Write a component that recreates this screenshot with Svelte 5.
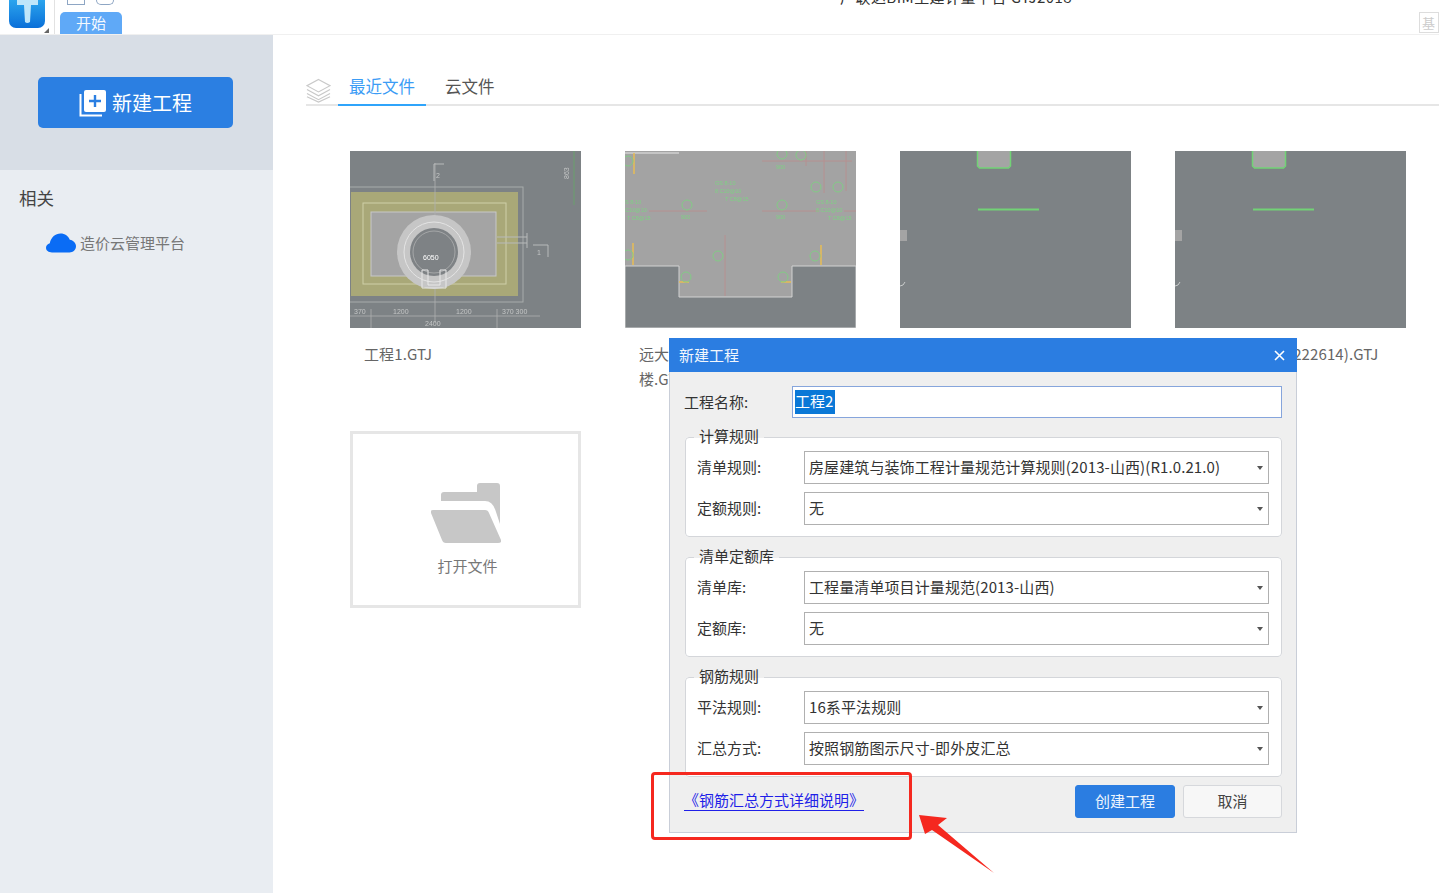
<script>
  let projectName = "工程2";

  const files = [
    { name: "工程1.GTJ", kind: "plan" },
    { name: "远大住宅工程项目一号地下室楼.GTJ", kind: "floor" },
    { name: "工程1备份工程(222613).GTJ", kind: "empty" },
    { name: "工程1备份工程(222614).GTJ", kind: "empty" }
  ];

  const groups = [
    {
      title: "计算规则",
      rows: [
        { label: "清单规则:", value: "房屋建筑与装饰工程计量规范计算规则(2013-山西)(R1.0.21.0)" },
        { label: "定额规则:", value: "无" }
      ]
    },
    {
      title: "清单定额库",
      rows: [
        { label: "清单库:", value: "工程量清单项目计量规范(2013-山西)" },
        { label: "定额库:", value: "无" }
      ]
    },
    {
      title: "钢筋规则",
      rows: [
        { label: "平法规则:", value: "16系平法规则" },
        { label: "汇总方式:", value: "按照钢筋图示尺寸-即外皮汇总" }
      ]
    }
  ];
</script>

<div class="app">
  <header class="topbar">
    <div class="logo-cell">
      <svg class="logo" viewBox="0 0 36 36" width="36" height="36">
        <defs>
          <linearGradient id="logoBg" x1="0" y1="0" x2="0" y2="1">
            <stop offset="0" stop-color="#35b4f4" />
            <stop offset="1" stop-color="#0a6fd8" />
          </linearGradient>
        </defs>
        <rect width="36" height="36" rx="7" fill="url(#logoBg)" />
        <path d="M8 6h21v7h-7l-1 17q-3 2-5 0l-1-17H8z" fill="#bfe6fa" />
      </svg>
      <span class="logo-corner"></span>
    </div>
    <div class="tools">
      <div class="quick">
        <span class="quick-a"></span>
        <span class="quick-b"></span>
      </div>
      <div class="start-tab">开始</div>
    </div>
    <div class="app-title">广联达BIM土建计量平台 GTJ2018</div>
    <div class="side-box">基</div>
  </header>

  <div class="content">
    <aside class="sidebar">
      <div class="side-top">
        <button class="new-btn">
          <svg viewBox="0 0 28 28" width="28" height="28">
            <path d="M1.500 5v21.500H23" fill="none" stroke="#fff" stroke-width="2" />
            <rect x="5" y="1" width="22" height="22" rx="2" fill="#fff" />
            <path d="M16 6v12M10 12h12" stroke="#2b7fe2" stroke-width="2.400" />
          </svg>
          <span>新建工程</span>
        </button>
      </div>
      <div class="side-rest">
        <div class="side-heading">相关</div>
        <div class="side-link">
          <svg viewBox="0 0 30 20" width="30" height="20">
            <path d="M6 19.500C2.500 19.500 0 17.500 0 14.800c0-2.300 1.500-4 3.800-4.600C5 4.200 9.500 0.500 14.500 0.500c4.500 0 8 2.600 9.300 6.300 3.500.6 6.200 3.300 6.200 6.500 0 3.500-3 6.200-6.500 6.200z" fill="#0a6cf5" />
          </svg>
          <span>造价云管理平台</span>
        </div>
      </div>
    </aside>

    <main class="main">
      <div class="tabs">
        <svg class="stack" viewBox="0 0 26 26" width="25" height="25" fill="none" stroke="#c9c9c9" stroke-width="1.200">
          <path d="M13 1.500 25 8l-12 6.500L1 8z" />
          <path d="M1 12l12 6.500L25 12" />
          <path d="M1 16l12 6.500L25 16" />
          <path d="M1 19.500l12 5.500 12-5.500" />
        </svg>
        <div class="tab active">最近文件</div>
        <div class="tab">云文件</div>
      </div>

      <div class="cards">
        {#each files as file}
          <div class="card">
            <div class="thumb">
              {#if file.kind === "plan"}
                <svg viewBox="0 0 231 177" width="231" height="177">
                  <rect width="231" height="177" fill="#7d8285" />
                  <rect x="-2" y="36" width="175" height="115" fill="none" stroke="#a8abab" />
                  <rect x="1" y="41" width="167" height="104" fill="#a9a878" />
                  <rect x="13" y="52" width="143" height="81" fill="none" stroke="#cfcfa8" />
                  <rect x="21" y="61" width="125" height="64" fill="#a4a4a4" stroke="#c8c8c8" />
                  <path d="M85 12v160M0 165h190M21 158v19M147 158v19" stroke="#aeb0b0" stroke-width=".8" fill="none" />
                  <path d="M84 30V13h10M183 94h15v12M177 82v15M147 86h30M147 92h30" stroke="#b8baba" fill="none" />
                  <path d="M224 0v54" stroke="#6aa06c" />
                  <circle cx="84" cy="101" r="37" fill="#c6c6c6" />
                  <circle cx="84" cy="101" r="30" fill="none" stroke="#e4e4e4" />
                  <circle cx="84" cy="101" r="24" fill="#7e8285" />
                  <circle cx="84" cy="101" r="21" fill="none" stroke="#a5a7a8" />
                  <path d="M72 119h6v15M96 119h-6v15M72 119v18h24v-18M78 134h12" stroke="#e8e8e8" fill="none" />
                  <text x="73" y="109" class="cad bright">6050</text>
                  <text x="4" y="163" class="cad">370</text>
                  <text x="43" y="163" class="cad">1200</text>
                  <text x="106" y="163" class="cad">1200</text>
                  <text x="152" y="163" class="cad">370 300</text>
                  <text x="75" y="175" class="cad">2400</text>
                  <text x="86" y="27" class="cad">2</text>
                  <text x="187" y="104" class="cad">1</text>
                  <text transform="translate(219 28) rotate(-90)" class="cad">863</text>
                </svg>
              {:else if file.kind === "floor"}
                <svg viewBox="0 0 231 177" width="231" height="177">
                  <rect width="231" height="177" fill="#a3a3a3" />
                  <path d="M0 2h54" stroke="#d0d0d0" stroke-width="1.500" />
                  <path d="M0 115h54v31h113v-31h64v62H0z" fill="#7d8285" stroke="#d2d2d2" />
                  <path d="M24 60h58M137 60h57M219 60h12M137 10h90M199 0v42M221 0v40M181 0v15M100 84v61" stroke="#b69090" fill="none" />
                  <path d="M9 2v21M8 92v22M196 94v20M54 131h10M156 131h10" stroke="#e8bd55" stroke-width="1.500" fill="none" />
                  <g fill="none" stroke="#82cc85">
                    <circle cx="62" cy="54" r="5" />
                    <circle cx="157" cy="54" r="5" />
                    <circle cx="157" cy="3" r="5" />
                    <circle cx="176" cy="4" r="5" />
                    <circle cx="191" cy="36" r="5" />
                    <circle cx="213" cy="36" r="5" />
                    <circle cx="93" cy="105" r="5" />
                    <circle cx="190" cy="105" r="5" />
                    <circle cx="61" cy="126" r="5" />
                    <circle cx="158" cy="126" r="5" />
                    <circle cx="3" cy="104" r="5" />
                    <circle cx="3" cy="10" r="5" />
                  </g>
                  <text x="90" y="34" class="cad green">GS 8-10</text>
                  <text x="90" y="42" class="cad green">8 C10@10</text>
                  <text x="100" y="50" class="cad green">T C8@15</text>
                  <text x="191" y="53" class="cad green">GS 8-10</text>
                  <text x="191" y="61" class="cad green">8 C10@10</text>
                  <text x="203" y="69" class="cad green">T C8@15</text>
                  <text x="0" y="53" class="cad green">S 8-10</text>
                  <text x="0" y="61" class="cad green">C10@10</text>
                  <text x="2" y="69" class="cad green">T C8@15</text>
                  <text x="56" y="68" class="cad green">900</text>
                  <text x="151" y="68" class="cad green">900</text>
                  <text x="151" y="18" class="cad green">900</text>
                </svg>
              {:else}
                <svg viewBox="0 0 231 177" width="231" height="177">
                  <rect width="231" height="177" fill="#7d8285" />
                  <path d="M77.500 0v15l2 2h29l2-2V0" fill="#a4a4a4" stroke="#72d276" stroke-width="1.500" />
                  <path d="M78 58.500h61" stroke="#72d276" stroke-width="2" />
                  <rect x="0" y="79" width="7" height="11" fill="#a4a4a4" />
                  <path d="M0 135l3-1 2-3" stroke="#c9cbcb" fill="none" />
                </svg>
              {/if}
            </div>
            <div class="file-name">{file.name}</div>
          </div>
        {/each}

        <div class="card open-card">
          <svg viewBox="0 0 70 60" width="70" height="60">
            <path d="M10 18v-6q0-3 3-3h33V3q0-3 3-3h17q3 0 3 3v38l-4-12q-3-11-11-11z" fill="#c7c7c7" />
            <path d="M2 27h52q3 0 4 3l12 27q1 3-3 3H15q-3 0-4-3L0 30q-1-3 2-3z" fill="#c7c7c7" />
          </svg>
          <span>打开文件</span>
        </div>
      </div>
    </main>
  </div>

  <section class="dialog">
    <div class="dialog-head">
      <span>新建工程</span>
      <svg viewBox="0 0 11 11" width="11" height="11">
        <path d="M1 1l9 9M10 1l-9 9" stroke="#fff" stroke-width="1.600" />
      </svg>
    </div>
    <div class="dialog-body">
      <div class="name-row">
        <span class="name-label">工程名称:</span>
        <div class="name-input"><span class="selected">{projectName}</span></div>
      </div>

      {#each groups as group}
        <fieldset class="group">
          <legend>{group.title}</legend>
          {#each group.rows as row}
            <div class="field">
              <span class="field-label">{row.label}</span>
              <div class="select">
                <span>{row.value}</span>
                <i class="caret"></i>
              </div>
            </div>
          {/each}
        </fieldset>
      {/each}

      <div class="dialog-foot">
        <span class="doc-link">《钢筋汇总方式详细说明》</span>
        <div class="actions">
          <button class="btn primary">创建工程</button>
          <button class="btn">取消</button>
        </div>
      </div>
    </div>
  </section>

  <div class="mark-box"></div>
  <svg class="mark-arrow" viewBox="0 0 80 62" width="80" height="62">
    <path d="M1 2 29 5 20 12 76 60 14 17 7 21z" fill="#f5281f" />
  </svg>
</div>

<style>
  :global(body) {
    background: #fff;
  }

  .app {
    position: relative;
    width: 1439px;
    height: 893px;
    overflow: hidden;
    background: #fff;
    font-family: "Noto Sans CJK SC", "Liberation Sans", sans-serif;
    font-size: 15px;
    color: #555;
  }

  .topbar {
    display: flex;
    height: 35px;
    overflow: hidden;
    box-sizing: border-box;
    border-bottom: 1px solid #f0f0f0;
  }

  .logo-cell {
    position: relative;
    flex: none;
    width: 45px;
    height: 34px;
    padding-left: 9px;
    border-right: 1px solid #e2e2e2;
  }

  .logo {
    display: block;
    margin-top: -8px;
  }

  .logo-corner {
    position: absolute;
    left: 44px;
    top: 28px;
    border-left: 5px solid transparent;
    border-bottom: 5px solid #666;
  }

  .tools {
    flex: none;
    width: 62px;
    margin-left: 5px;
  }

  .quick {
    display: flex;
    gap: 11px;
    height: 12px;
    padding-left: 7px;
  }

  .quick-a,
  .quick-b {
    display: block;
    width: 16px;
    height: 4px;
    border: 1px solid #8ea6c4;
    border-top: none;
  }

  .quick-b {
    border-radius: 0 0 5px 5px;
  }

  .start-tab {
    height: 23px;
    line-height: 21px;
    text-align: center;
    color: #f4f9ff;
    background: #5fa9f7;
    border-radius: 5px 5px 0 0;
  }

  .app-title {
    flex: none;
    margin: -14px 0 0 718px;
    line-height: 22px;
    letter-spacing: 0.45px;
    color: #333;
    white-space: nowrap;
  }

  .side-box {
    flex: none;
    box-sizing: border-box;
    width: 20px;
    height: 21px;
    margin: 12px 0 0 auto;
    border: 1px solid #ddd;
    font-size: 13px;
    line-height: 19px;
    color: #ccc;
    text-indent: 2px;
  }

  .content {
    display: flex;
    height: 858px;
  }

  .sidebar {
    flex: none;
    display: flex;
    flex-direction: column;
    width: 273px;
    background: #e9edf2;
  }

  .side-top {
    height: 135px;
    box-sizing: border-box;
    padding: 42px 0 0 38px;
    background: #d8dee6;
  }

  .new-btn {
    display: flex;
    align-items: center;
    justify-content: center;
    gap: 5px;
    width: 195px;
    height: 51px;
    padding: 0;
    border: none;
    border-radius: 5px;
    background: #2b7fe2;
    color: #fff;
    font: inherit;
    font-size: 20px;
  }

  .side-heading {
    margin: 15px 0 0 19px;
    font-size: 17.500px;
    line-height: 26px;
    color: #444;
  }

  .side-link {
    display: flex;
    align-items: center;
    gap: 4px;
    margin: 20px 0 0 46px;
    line-height: 24px;
    color: #777;
  }

  .main {
    flex: 1;
    min-width: 0;
    padding-left: 33px;
  }

  .tabs {
    display: flex;
    align-items: flex-end;
    height: 71px;
    border-bottom: 2px solid #e6e6e6;
    box-sizing: border-box;
  }

  .stack {
    flex: none;
    margin: 0 7px 1px 0;
  }

  .tab {
    box-sizing: border-box;
    height: 36px;
    margin-bottom: -2px;
    padding: 0 11px;
    font-size: 16.500px;
    line-height: 32px;
    color: #555;
  }

  .tab.active {
    width: 88px;
    margin-right: 8px;
    color: #3b9cf5;
    border-bottom: 2px solid #2fa4fb;
  }

  .cards {
    display: grid;
    grid-template-columns: repeat(4, 231px);
    column-gap: 44px;
    padding: 45px 0 0 44px;
  }

  .card {
    height: 280px;
  }

  .thumb {
    height: 177px;
    overflow: hidden;
  }

  .thumb svg {
    display: block;
    filter: blur(0.5px);
  }

  .cad {
    font-family: "Liberation Sans", sans-serif;
    font-size: 7px;
    fill: #c4c6c6;
  }

  .cad.bright {
    fill: #fff;
  }

  .cad.green {
    font-size: 5.500px;
    fill: #7fd184;
  }

  .file-name {
    width: 205px;
    margin: 13px 0 0 14px;
    line-height: 25px;
    letter-spacing: 0.1px;
    color: #666;
    word-break: break-all;
  }

  .open-card {
    display: flex;
    flex-direction: column;
    align-items: center;
    box-sizing: border-box;
    height: 177px;
    padding-top: 49px;
    border: 3px solid #e6e6e6;
    color: #777;
  }

  .open-card span {
    margin-top: 11px;
    padding-left: 4px;
    line-height: 24px;
  }

  .dialog {
    position: absolute;
    left: 669px;
    top: 338px;
    width: 628px;
    box-sizing: border-box;
    background: #efefef;
    border: 1px solid #c9ced8;
    border-top: none;
    color: #333;
  }

  .dialog-head {
    display: flex;
    align-items: center;
    justify-content: space-between;
    height: 34px;
    margin: 0 -1px;
    padding: 0 12px 0 10px;
    background: #2b7de1;
    color: #f2f7fd;
  }

  .dialog-head span,
  .name-label,
  .field-label,
  .select span {
    padding-bottom: 2px;
  }

  .dialog-body {
    padding: 14px;
  }

  .name-row {
    display: flex;
    align-items: center;
    height: 32px;
    margin-bottom: 19px;
  }

  .name-label {
    flex: none;
    width: 108px;
  }

  .name-input {
    flex: 1;
    box-sizing: border-box;
    height: 32px;
    padding: 3px 2px;
    background: #fff;
    border: 1px solid #86a5dc;
  }

  .selected {
    display: inline-block;
    height: 24px;
    padding-right: 2px;
    line-height: 22px;
    background: #0a78d7;
    color: #fff;
  }

  .group {
    box-sizing: border-box;
    height: 100px;
    min-width: 0;
    margin: 0 0 20px 1px;
    padding: 0 12px 0 11px;
    background: #fff;
    border: 1px solid #d4d6da;
    border-radius: 4px;
    position: relative;
  }

  .group legend {
    position: absolute;
    left: 8px;
    top: -12px;
    padding: 0 5px;
    line-height: 20px;
    background: linear-gradient(#efefef 12px, #fff 12px);
  }

  .field {
    display: flex;
    align-items: center;
    height: 33px;
    margin-bottom: 8px;
  }

  .field:first-of-type {
    margin-top: 13px;
  }

  .field-label {
    flex: none;
    width: 107px;
  }

  .select {
    flex: 1;
    display: flex;
    align-items: center;
    justify-content: space-between;
    box-sizing: border-box;
    height: 33px;
    padding: 0 5px 0 4px;
    background: #fff;
    border: 1px solid #b0b0b0;
    letter-spacing: 0.1px;
    white-space: nowrap;
  }

  .caret {
    border-left: 3.500px solid transparent;
    border-right: 3.500px solid transparent;
    border-top: 4px solid #555;
  }

  .dialog-foot {
    display: flex;
    align-items: center;
    justify-content: space-between;
    margin-top: -12px;
  }

  .doc-link {
    margin-top: -2px;
    padding-bottom: 2px;
    color: #1f1fe8;
    border-bottom: 1px solid #1f1fe8;
    line-height: 17px;
  }

  .actions {
    display: flex;
    gap: 8px;
  }

  .btn {
    width: 99px;
    height: 33px;
    padding: 0 0 2px;
    border: 1px solid #d6d8dc;
    border-radius: 3px;
    background: #f7f7f7;
    color: #444;
    font: inherit;
  }

  .btn.primary {
    width: 100px;
    border-color: #2b7de1;
    background: #2b7de1;
    color: #eef5fd;
  }

  .mark-box {
    position: absolute;
    left: 651px;
    top: 772px;
    width: 261px;
    height: 68px;
    box-sizing: border-box;
    border: 3px solid #f5281f;
    border-radius: 4px;
  }

  .mark-arrow {
    position: absolute;
    left: 918px;
    top: 813px;
  }
</style>
